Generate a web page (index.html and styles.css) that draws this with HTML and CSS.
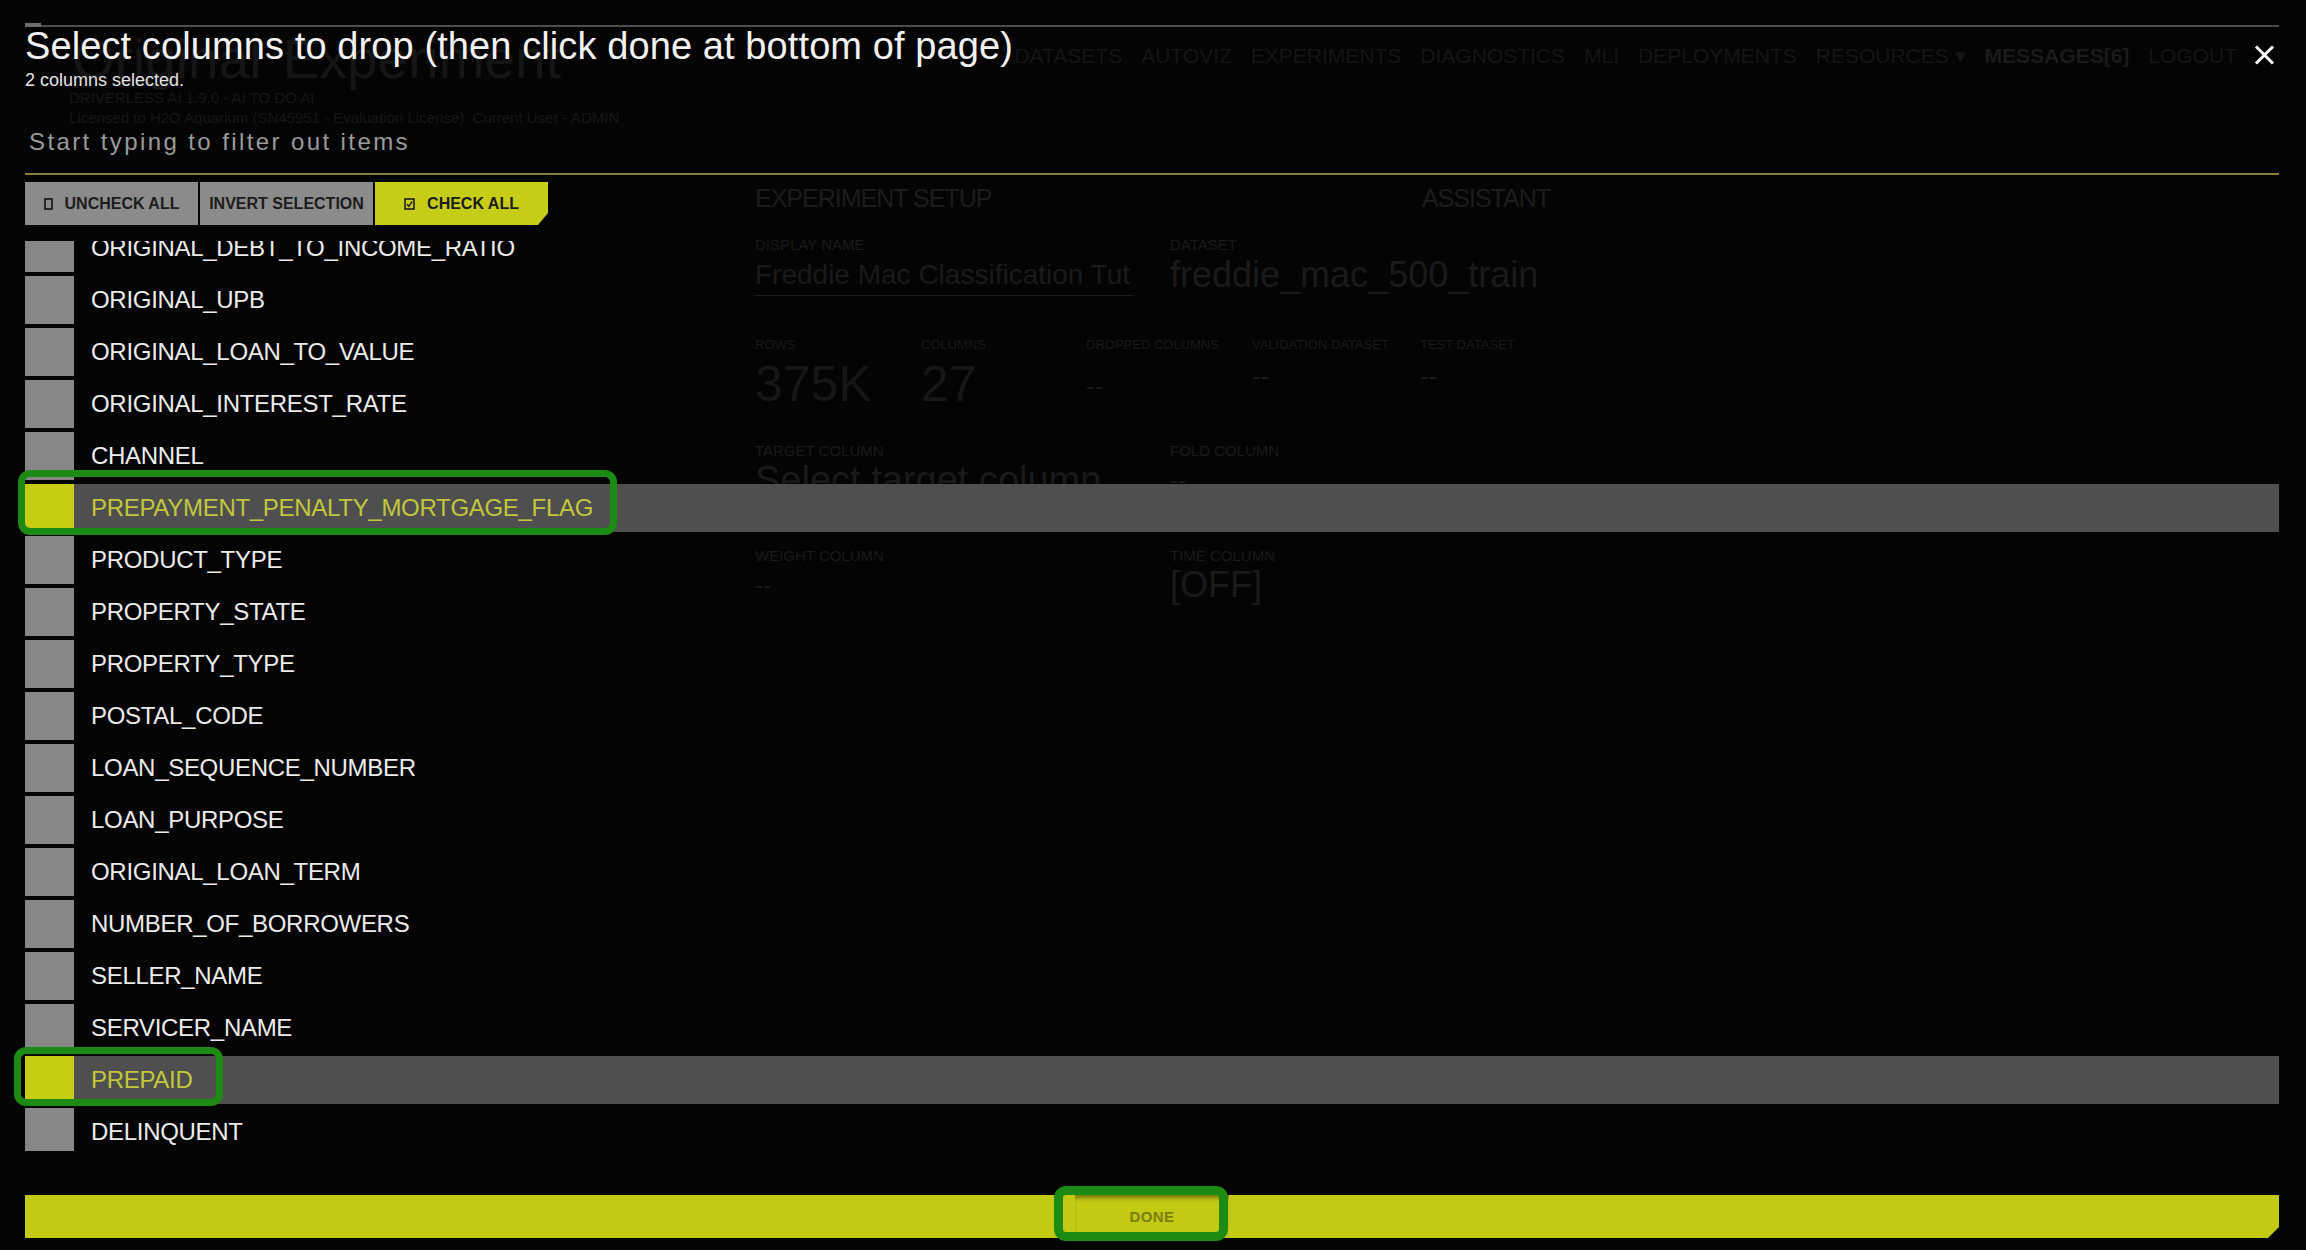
FILE: index.html
```html
<!DOCTYPE html>
<html lang="en">
<head>
<meta charset="utf-8">
<title>Select columns to drop</title>
<link rel="stylesheet" href="styles.css">
</head>
<body>
<div class="page">
  <header class="page-head">
    <div class="page-title">Original Experiment</div>
    <nav class="nav">
      <span>DATASETS</span><span>AUTOVIZ</span><span>EXPERIMENTS</span><span>DIAGNOSTICS</span><span>MLI</span><span>DEPLOYMENTS</span><span>RESOURCES &#9662;</span><span class="nav-strong">MESSAGES[6]</span><span>LOGOUT</span>
    </nav>
  </header>
  <div class="meta">
    <div>DRIVERLESS AI 1.9.0 - AI TO DO AI</div>
    <div>Licensed to H2O Aquarium (SN45951 - Evaluation License). Current User - ADMIN</div>
  </div>
  <section class="setup">
    <div class="setup-head"><span>EXPERIMENT SETUP</span><span>ASSISTANT</span></div>
    <div class="fields fields-first">
      <div class="field"><div class="flabel">DISPLAY NAME</div><div class="fvalue finput">Freddie Mac Classification Tut</div></div>
      <div class="field"><div class="flabel">DATASET</div><div class="fvalue fbig">freddie_mac_500_train</div></div>
    </div>
    <div class="stats">
      <div class="stat"><div class="slabel">ROWS</div><div class="svalue">375K</div></div>
      <div class="stat"><div class="slabel">COLUMNS</div><div class="svalue">27</div></div>
      <div class="stat"><div class="slabel">DROPPED COLUMNS</div><div class="sdash sdash-low">--</div></div>
      <div class="stat"><div class="slabel">VALIDATION DATASET</div><div class="sdash">--</div></div>
      <div class="stat"><div class="slabel">TEST DATASET</div><div class="sdash">--</div></div>
    </div>
    <div class="fields fields-target">
      <div class="field"><div class="flabel">TARGET COLUMN</div><div class="fvalue ftarget">Select target column</div></div>
      <div class="field"><div class="flabel">FOLD COLUMN</div><div class="fvalue fdash">--</div></div>
    </div>
    <div class="fields fields-weight">
      <div class="field"><div class="flabel">WEIGHT COLUMN</div><div class="fvalue fdash">--</div></div>
      <div class="field"><div class="flabel">TIME COLUMN</div><div class="fvalue ftime">[OFF]</div></div>
    </div>
  </section>
</div>

<div class="modal">
  <div class="topline"><span class="notch"></span></div>
  <h1 class="title">Select columns to drop (then click done at bottom of page)</h1>
  <div class="count">2 columns selected.</div>
  <div class="filter"><span class="placeholder">Start typing to filter out items</span></div>
  <div class="actions">
    <button class="btn"><svg class="ico" width="9" height="12" viewBox="0 0 9 12"><rect x="1" y="1" width="7" height="10" fill="none" stroke="#1e1e1e" stroke-width="1.8"/></svg>UNCHECK ALL</button>
    <button class="btn">INVERT SELECTION</button>
    <button class="btn btn-primary"><svg class="ico" width="11" height="12" viewBox="0 0 11 12"><rect x="1" y="1" width="9" height="10" fill="none" stroke="#1e1e1e" stroke-width="1.6"/><path d="M3 6.2 L4.9 8.3 L8.2 3.4" fill="none" stroke="#1e1e1e" stroke-width="1.5"/></svg>CHECK ALL</button>
  </div>
  <div class="list-viewport">
    <ul class="list">
      <li class="item"><span class="box"></span><span class="label">ORIGINAL_DEBT_TO_INCOME_RATIO</span></li>
      <li class="item"><span class="box"></span><span class="label">ORIGINAL_UPB</span></li>
      <li class="item"><span class="box"></span><span class="label">ORIGINAL_LOAN_TO_VALUE</span></li>
      <li class="item"><span class="box"></span><span class="label">ORIGINAL_INTEREST_RATE</span></li>
      <li class="item"><span class="box"></span><span class="label">CHANNEL</span></li>
      <li class="item selected"><span class="box"></span><span class="label">PREPAYMENT_PENALTY_MORTGAGE_FLAG</span></li>
      <li class="item"><span class="box"></span><span class="label">PRODUCT_TYPE</span></li>
      <li class="item"><span class="box"></span><span class="label">PROPERTY_STATE</span></li>
      <li class="item"><span class="box"></span><span class="label">PROPERTY_TYPE</span></li>
      <li class="item"><span class="box"></span><span class="label">POSTAL_CODE</span></li>
      <li class="item"><span class="box"></span><span class="label">LOAN_SEQUENCE_NUMBER</span></li>
      <li class="item"><span class="box"></span><span class="label">LOAN_PURPOSE</span></li>
      <li class="item"><span class="box"></span><span class="label">ORIGINAL_LOAN_TERM</span></li>
      <li class="item"><span class="box"></span><span class="label">NUMBER_OF_BORROWERS</span></li>
      <li class="item"><span class="box"></span><span class="label">SELLER_NAME</span></li>
      <li class="item"><span class="box"></span><span class="label">SERVICER_NAME</span></li>
      <li class="item selected"><span class="box"></span><span class="label">PREPAID</span></li>
      <li class="item"><span class="box"></span><span class="label">DELINQUENT</span></li>
    </ul>
  </div>
  <div class="done-bar"><button class="done">DONE</button></div>
  <button class="close" aria-label="Close"><svg width="21" height="20" viewBox="0 0 21 20"><path d="M2 1.5 L19 18.5 M19 1.5 L2 18.5" stroke="#ffffff" stroke-width="3" fill="none"/></svg></button>
</div>

<div class="mark mark-flag"></div>
<div class="mark mark-prepaid"></div>
<div class="mark mark-done"></div>
</body>
</html>
```

FILE: styles.css
```css
* { box-sizing: border-box; }
html, body { margin: 0; padding: 0; }
body {
  width: 2306px;
  height: 1250px;
  overflow: hidden;
  position: relative;
  background: #040404;
  font-family: "Liberation Sans", Arial, sans-serif;
  color: #ececec;
}

/* ---------- faint page behind the modal ---------- */
.page {
  padding: 33px 69px 0 33px;
  color: #1b1b1b;
}
.page-head {
  display: flex;
  justify-content: space-between;
  align-items: flex-start;
}
.page-title {
  font-size: 55px;
  line-height: 52px;
  color: #151515;
  padding-left: 39px;
  word-spacing: 6px;
}
.nav {
  margin-top: 12px;
  display: flex;
  gap: 19px;
  font-size: 21px;
  line-height: 21px;
  color: #151515;
}
.nav-strong { font-weight: bold; color: #1a1a1a; }
.meta {
  margin-top: 3px;
  padding-left: 36px;
  font-size: 15px;
  line-height: 20px;
  color: #171717;
}
.setup {
  margin-left: 722px;
  margin-top: 55px;
  width: 795px;
}
.setup-head {
  display: flex;
  justify-content: space-between;
  font-size: 25px;
  letter-spacing: -1px;
  line-height: 30px;
  color: #1c1c1c;
}
.fields {
  display: grid;
  grid-template-columns: 415px 380px;
}
.fields-first { margin-top: 23px; }
.fields-target { margin-top: 33px; }
.fields-weight { margin-top: 47px; }
.flabel {
  font-size: 15px;
  line-height: 18px;
  color: #1a1a1a;
}
.fvalue { color: #1a1a1a; }
.finput {
  margin-top: 5px;
  width: 378px;
  font-size: 28px;
  line-height: 32px;
  padding-bottom: 4px;
  border-bottom: 1px solid #1c1c1c;
  white-space: nowrap;
  overflow: hidden;
}
.fbig {
  margin-top: 5px;
  font-size: 36px;
  line-height: 32px;
}
.ftarget { font-size: 38px; line-height: 40px; color: #1a1a1a; }
.fdash { font-size: 24px; line-height: 40px; color: #1a1a1a; }
.ftime { font-size: 36px; line-height: 40px; color: #1a1a1a; }
.stats {
  margin-top: 41px;
  display: grid;
  grid-template-columns: 166px 165px 166px 168px 130px;
}
.slabel {
  font-size: 13px;
  line-height: 16px;
  color: #191919;
  white-space: nowrap;
}
.svalue {
  margin-top: 6px;
  font-size: 50px;
  line-height: 50px;
  color: #161616;
}
.sdash { margin-top: 8px; font-size: 26px; line-height: 30px; color: #1a1a1a; }
.sdash-low { margin-top: 18px; }

/* ---------- modal ---------- */
.modal {
  position: absolute;
  inset: 0;
  padding: 25px 27px 0 25px;
  display: flex;
  flex-direction: column;
}
.topline {
  height: 2px;
  background: #4d4d4d;
  position: relative;
}
.notch {
  position: absolute;
  left: 0;
  top: -2px;
  width: 16px;
  height: 4px;
  background: #6e6e6e;
}
.title {
  margin: 0;
  font-size: 38px;
  line-height: 38px;
  letter-spacing: 0.1px;
  font-weight: normal;
  color: #f2f2f2;
  white-space: nowrap;
}
.count {
  margin-top: 6px;
  font-size: 18px;
  line-height: 18px;
  color: #e4e4e4;
}
.filter {
  padding: 41px 0 19px 4px;
  border-bottom: 2px solid #7f8238;
}
.placeholder {
  display: block;
  font-size: 24px;
  line-height: 24px;
  letter-spacing: 2.4px;
  color: #9a9a9a;
}
.actions {
  margin-top: 7px;
  height: 43px;
  display: flex;
  gap: 2px;
}
.btn {
  width: 173px;
  height: 43px;
  border: 0;
  padding: 0;
  margin: 0;
  background: #8b8b8b;
  color: #1c1c1c;
  font-family: "Liberation Sans", Arial, sans-serif;
  font-weight: bold;
  font-size: 16px;
  display: flex;
  align-items: center;
  justify-content: center;
}
.btn-primary {
  background: #c6cd17;
  clip-path: polygon(0 0, 100% 0, 100% calc(100% - 12px), calc(100% - 10px) 100%, 0 100%);
}
.ico { margin-right: 12px; flex: none; }
.list-viewport {
  margin-top: 16px;
  height: 910px;
  overflow: hidden;
}
.list {
  list-style: none;
  margin: -17px 0 0 0;
  padding: 0;
}
.item {
  height: 48px;
  margin-bottom: 4px;
  display: flex;
  align-items: center;
}
.box {
  width: 49px;
  height: 48px;
  background: #878787;
  flex: none;
}
.label {
  margin-left: 17px;
  font-size: 24px;
  letter-spacing: -0.3px;
  color: #ececec;
}
.item.selected { background: #4f4f4f; }
.item.selected .box { background: #c6cd14; }
.item.selected .label { color: #c2c73c; }

.done-bar {
  margin-top: 44px;
  height: 43px;
  background: #c3ca14;
  clip-path: polygon(0 0, 100% 0, 100% calc(100% - 11px), calc(100% - 11px) 100%, 0 100%);
  display: flex;
  justify-content: center;
}
.done {
  width: 154px;
  height: 43px;
  border: 0;
  margin: 0;
  padding: 0;
  background: #c3ca14;
  box-shadow: inset 0 5px 4px -2px rgba(0, 0, 0, 0.4);
  color: #7a7f10;
  font-family: "Liberation Sans", Arial, sans-serif;
  font-weight: bold;
  font-size: 15px;
  letter-spacing: 0.4px;
}
.close {
  position: absolute;
  left: 2254px;
  top: 45px;
  width: 21px;
  height: 20px;
  padding: 0;
  border: 0;
  background: transparent;
}
.close svg { display: block; }

/* ---------- green annotation frames ---------- */
.mark {
  position: absolute;
  border: 7px solid #1d8a14;
  border-radius: 12px;
}
.mark-flag { left: 18px; top: 470px; width: 599px; height: 65px; }
.mark-prepaid { left: 14px; top: 1047px; width: 209px; height: 59px; }
.mark-done { left: 1054px; top: 1186px; width: 174px; height: 55px; border-width: 9px; }
```
